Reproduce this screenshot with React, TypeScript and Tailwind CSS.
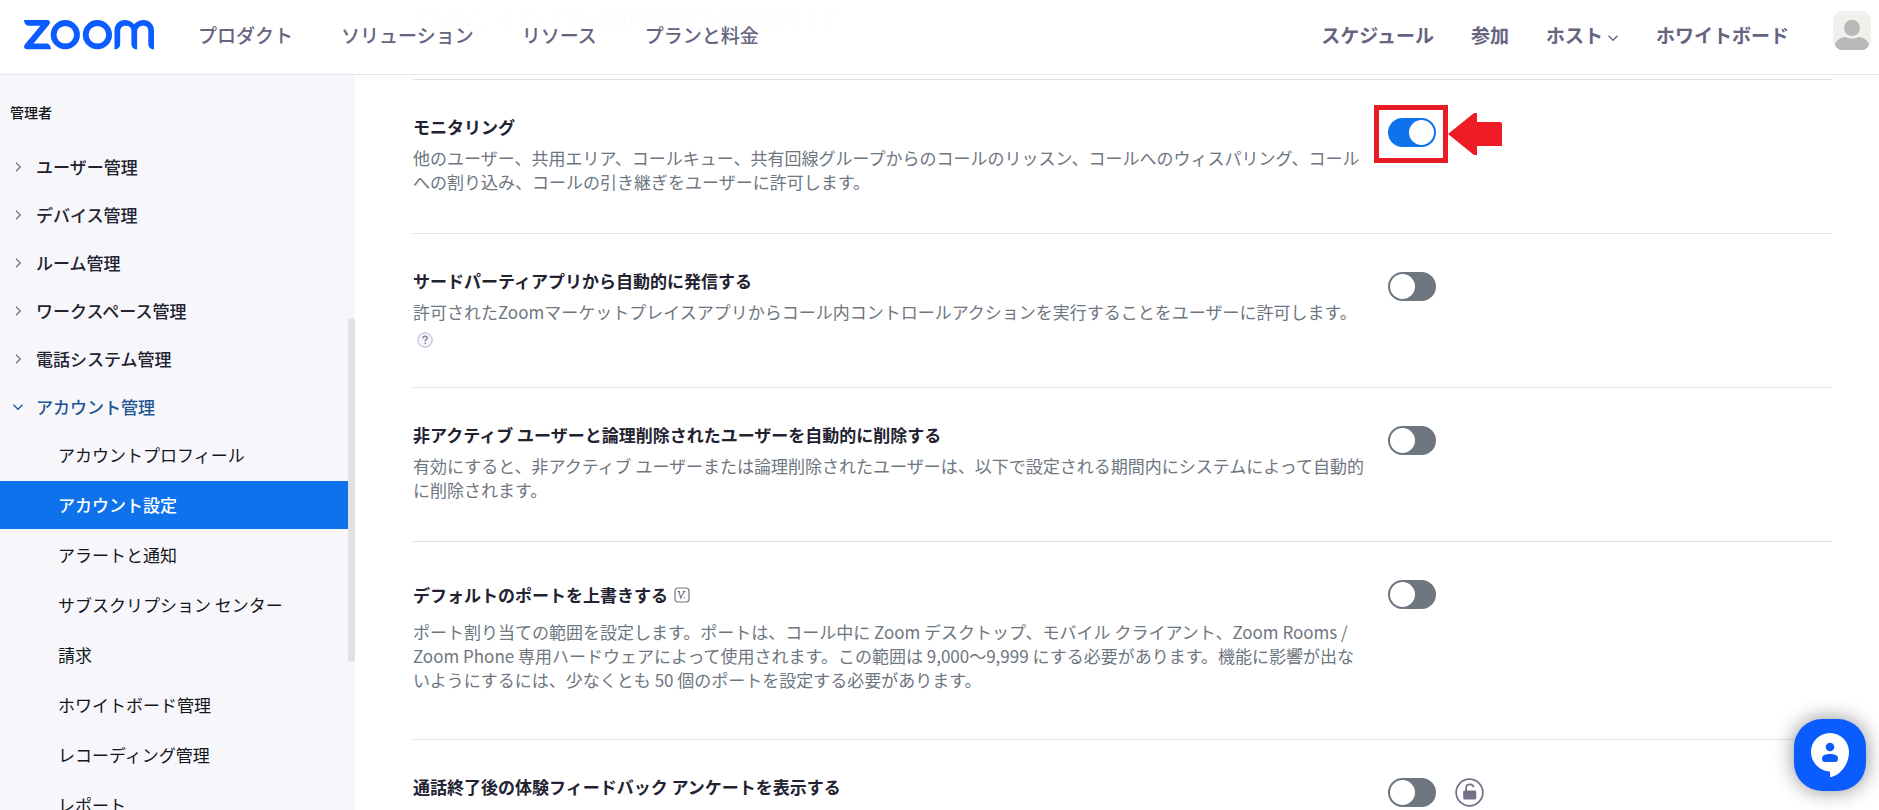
import React, { useState } from "react";

const mainLinks = ["プロダクト", "ソリューション", "リソース", "プランと料金"];

const sideGroups = [
  "ユーザー管理",
  "デバイス管理",
  "ルーム管理",
  "ワークスペース管理",
  "電話システム管理",
];

const accountLinks = [
  "アカウントプロフィール",
  "アカウント設定",
  "アラートと通知",
  "サブスクリプション センター",
  "請求",
  "ホワイトボード管理",
  "レコーディング管理",
  "レポート",
];

type Setting = {
  id: string
  title: string
  text: string
  on?: boolean
  help?: boolean
  version?: boolean
  locked?: boolean
  marked?: boolean
}

const settings: Setting[] = [
  {
    id: "monitoring",
    title: "モニタリング",
    text: "他のユーザー、共用エリア、コールキュー、共有回線グループからのコールのリッスン、コールへのウィスパリング、コールへの割り込み、コールの引き継ぎをユーザーに許可します。",
    on: true,
    marked: true,
  },
  {
    id: "third_party",
    title: "サードパーティアプリから自動的に発信する",
    text: "許可されたZoomマーケットプレイスアプリからコール内コントロールアクションを実行することをユーザーに許可します。",
    help: true,
  },
  {
    id: "auto_delete",
    title: "非アクティブ ユーザーと論理削除されたユーザーを自動的に削除する",
    text: "有効にすると、非アクティブ ユーザーまたは論理削除されたユーザーは、以下で設定される期間内にシステムによって自動的に削除されます。",
  },
  {
    id: "ports",
    title: "デフォルトのポートを上書きする",
    text: "ポート割り当ての範囲を設定します。ポートは、コール中に Zoom デスクトップ、モバイル クライアント、Zoom Rooms / Zoom Phone 専用ハードウェアによって使用されます。この範囲は 9,000～9,999 にする必要があります。機能に影響が出ないようにするには、少なくとも 50 個のポートを設定する必要があります。",
    version: true,
  },
  {
    id: "survey",
    title: "通話終了後の体験フィードバック アンケートを表示する",
    text: "このコールの最後にサムズアップ/ダウンの調査を表示します。参加者の体験が不十分だった場合は、問題の内容についての情報を追加で提供できます。",
    locked: true,
  },
];

function Logo() {
  return (
    <svg viewBox="0 0 130 30" className="w-[130px] h-[30px]" fill="none" stroke="#0b5cff" role="img" aria-label="Zoom">
      <path
        d="M0 0H23.5C26.2 0 26.8 2.8 25 4.8L9.5 23.4H22.5C25.4 23.4 26.6 26 27 29.2H3.2C0 29.2-.9 26.4 1.2 24L16.4 5.8H5.5C2 5.8.4 3.6 0 0Z"
        fill="#0b5cff"
        stroke="none"
      />
      <circle cx="41.3" cy="14.7" r="11.7" strokeWidth="5.8" />
      <circle cx="73.4" cy="14.7" r="11.7" strokeWidth="5.8" />
      <path
        d="M90.5 29.4V10.5C90.5 4.2 95 0 100.8 0C104.7 0 108 1.6 110.2 4.3C112.4 1.6 115.7 0 119.6 0C125.5 0 130 4.2 130 10.5V29.4C126.4 29.1 124.3 27.3 124.3 23.4V10.8C124.3 7.7 122.3 5.8 119 5.8C115.5 5.8 113.1 8.3 113.1 11.8V29.4C109.5 29.1 107.4 27.3 107.4 23.4V10.8C107.4 7.7 105 5.8 101.7 5.8C98.5 5.8 96.2 7.9 96.2 11.2V23.4C96.2 27.3 94.1 29.1 90.5 29.4Z"
        fill="#0b5cff"
        stroke="none"
      />
    </svg>
  );
}

function Chevron({ down, className }: { down?: boolean, className?: string }) {
  return (
    <svg viewBox="0 0 12 12" className={className} fill="none" stroke="currentColor" strokeWidth="1.3" aria-hidden="true">
      <path d={down ? "M1.5 3.8L6 8.3L10.5 3.8" : "M4 1.8L8.3 6L4 10.2"} />
    </svg>
  );
}

function Header() {

  const link = "text-[19px] leading-6 text-[#66647f]"

  return (
    <header className="absolute inset-x-0 top-0 z-10 flex h-[75px] items-start justify-between border-b border-[#e6e6ea] bg-white/98 pl-6 pr-2">
      <div className="flex items-start">
        <a href="#" className="mt-5"><Logo /></a>
        <nav className="ml-[44px] mt-[23px] flex gap-[48px]">
          {mainLinks.map((item) => (
            <a key={item} href="#" className={`${link} font-medium`}>{item}</a>
          ))}
        </nav>
      </div>

      <div className="flex items-start">
        <nav className="mt-[23px] flex gap-[37px]">
          <a href="#" className={`${link} font-bold`}>スケジュール</a>
          <a href="#" className={`${link} font-bold`}>参加</a>
          <button className={`${link} flex items-center gap-1 font-bold`}>
            ホスト
            <Chevron down className="mt-1.5 size-3" />
          </button>
          <a href="#" className={`${link} font-bold`}>ホワイトボード</a>
        </nav>
        <button className="ml-[44px] mt-[11px]" aria-label="プロフィール">
          <svg viewBox="0 0 38 39" className="w-[38px] h-[39px]">
            <rect width="38" height="39" rx="9" fill="#f0f0ec" />
            <ellipse cx="19" cy="17" rx="8" ry="8.3" fill="#b9b9b9" />
            <path d="M2 33C4 28.5 8.5 26 13 26C16.5 28 21.5 28 25 26C29.5 26 34 28.5 36 33C35 37 32 39 29 39H9C6 39 3 37 2 33Z" fill="#b9b9b9" />
          </svg>
        </button>
      </div>
    </header>
  );
}

function Sidebar() {
  return (
    <aside className="relative w-[355px] shrink-0 overflow-hidden bg-[#f7f7fb] pt-[75px] text-[17px] text-[#222230]">
      <h2 className="mt-[25px] pl-[10px] text-sm font-medium leading-6 text-[#131619]">管理者</h2>

      <nav className="mt-[19px] mr-[7px]">
        {sideGroups.map((item) => (
          <a key={item} href="#" className="flex h-12 items-center gap-3 pl-3 font-medium">
            <Chevron className="size-3 text-[#6e7680]" />
            {item}
          </a>
        ))}
        <a href="#" className="flex h-12 items-center gap-3 pl-3 font-medium text-[#1f5695]">
          <Chevron down className="size-3" />
          アカウント管理
        </a>

        <div className="flex flex-col gap-[2px]">
          {accountLinks.map((item) => (
            <a
              key={item}
              href="#"
              className={`flex h-12 items-center pl-[58px] ${item === "アカウント設定" ? "bg-[#0e72ed] font-medium text-white" : "text-[#131619]"}`}
            >
              {item}
            </a>
          ))}
        </div>
      </nav>

      {/* scrollbar */}
      <div className="absolute right-0 top-[318px] h-[344px] w-[7px] rounded-full bg-[#e1e1e1]"></div>
    </aside>
  );
}

function HelpIcon() {
  return (
    <svg viewBox="0 0 16 16" className="size-4" fill="none" aria-label="ヘルプ">
      <circle cx="8" cy="8" r="7.2" fill="#f4f4fb" stroke="#b3b1c6" />
      <path d="M6 6.3C6 5 6.9 4.3 8.1 4.3C9.3 4.3 10.2 5 10.2 6.1C10.2 7.5 8.2 7.5 8.2 9.2M8.2 10.5V12" stroke="#8583a0" strokeWidth="1.5" />
    </svg>
  );
}

function VersionIcon() {
  return (
    <svg viewBox="0 0 16 16" className="size-4" fill="none" stroke="#6e7680" aria-hidden="true">
      <rect x="1" y="1" width="14" height="14" rx="3" strokeWidth="1.2" />
      <path d="M3.5 4.5H6M8.8 4.5H11.5M5 4.5L6.7 11L10.3 4.5M9.8 11H11.2" strokeWidth="1.1" />
    </svg>
  );
}

function LockIcon() {
  return (
    <svg viewBox="0 0 30 30" className="size-[29px]" fill="none" stroke="#747087" aria-hidden="true">
      <circle cx="15" cy="15" r="13.8" strokeWidth="1.8" />
      <rect x="8.5" y="13" width="13.5" height="9.3" rx="1.5" fill="#747087" stroke="none" />
      <path d="M11.5 13.5V10.5C11.5 5.8 18.3 5.4 19.2 9.6" strokeWidth="1.8" />
    </svg>
  );
}

function SettingRow({ item }: { item: Setting }) {

  const [checked, setChecked] = useState(!!item.on);

  return (
    <div className={`grid grid-cols-[68.7%_1fr] border-b border-[#dfe0e4] pt-[35px] ${item.version ? "pb-[47px]" : "pb-[39px]"}`}>
      <div className="pr-5">
        <div className={`flex items-center gap-1.5 ${item.version ? "h-9" : "h-6"}`}>
          <label htmlFor={item.id} className="text-[17px] font-bold leading-6 text-[#222230]">{item.title}</label>
          {item.version && <VersionIcon />}
        </div>
        <p className="mt-[7px] text-[17px] leading-6 text-[#6e7680]">
          {item.text}
        </p>
        {item.help && <div className="flex h-6 items-end pl-1"><HelpIcon /></div>}
      </div>

      <div className="flex items-start gap-[19px] pt-[3px]">
        <div className="relative flex">
          <input
            id={item.id}
            type="checkbox"
            role="switch"
            checked={checked}
            onChange={() => setChecked(!checked)}
            className="h-[29px] w-12 cursor-pointer appearance-none rounded-full bg-[#6e7680] p-[2px] before:block before:size-[25px] before:rounded-full before:bg-white checked:bg-[#0e72ed] checked:before:ml-[19px]"
          />
          {item.marked && (
            <>
              <div className="pointer-events-none absolute -left-[14px] -top-[13px] h-[58px] w-[74px] border-5 border-[#e81c24]"></div>
              <svg viewBox="0 0 54 42" className="absolute left-[60px] -top-[5px] h-[42px] w-[54px]" fill="#ee1c24" aria-hidden="true">
                <path d="M0 21L26 0H29V9H52Q54 9 54 11V33H29V42H26Z" />
              </svg>
            </>
          )}
        </div>
        {item.locked && <LockIcon />}
      </div>
    </div>
  );
}

export default function App() {
  return (
    <div lang="ja" className="relative flex h-screen overflow-hidden bg-white font-['Noto_Sans_CJK_JP',sans-serif]">
      <Header />
      <Sidebar />

      <main className="min-w-0 flex-1 overflow-hidden pl-[58px] pr-[47px]">
        {/* end of the previous setting, scrolled under the header */}
        <div className="border-b border-[#dfe0e4] pb-12 pt-[7px]">
          <p className="text-[17px] leading-6 text-[#6e7680]">する際に、オプトアウト理由を選択する必要があります。</p>
        </div>
        {settings.map((item) => (
          <SettingRow key={item.id} item={item} />
        ))}
      </main>

      <button
        aria-label="サポート"
        className="absolute bottom-[19px] right-[13px] z-10 size-[72px] rounded-[28px] bg-[#0b5cff] shadow-[0_0_20px_rgba(0,0,0,0.45)]"
      >
        <svg viewBox="0 0 72 72" className="size-full">
          <path d="M36 14C25.5 14 17 22.5 17 33C17 43.5 25.5 52 36 52.5V58.2C44 57.5 55 47 55 33C55 22.5 46.5 14 36 14Z" fill="#fff" />
          <circle cx="36" cy="28" r="4.3" fill="#0b5cff" />
          <path d="M28 39.5C28 36 32 35 36 35C40 35 44 36 44 39.5C44 42 43 43 41 43H31C29 43 28 42 28 39.5Z" fill="#0b5cff" />
        </svg>
      </button>
    </div>
  );
}
